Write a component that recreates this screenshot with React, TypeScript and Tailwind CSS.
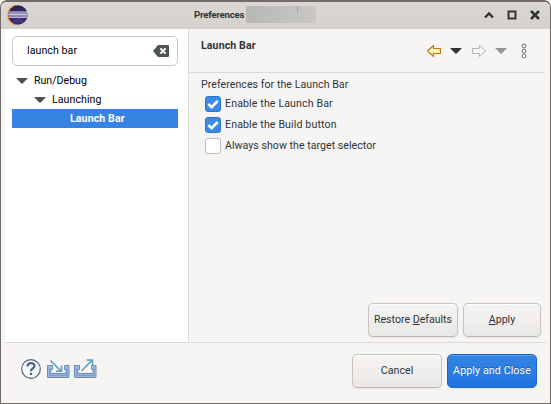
import React from "react";

const button =
  "box-border flex h-[34px] items-center justify-center rounded-[5px] border border-[#c8c3bd] border-b-[#bfb8b1] bg-linear-to-b from-[#f6f5f4] to-[#eae8e6] shadow-[0_1px_2px_rgba(0,0,0,0.07),inset_0_1px_0_#fff]";

function Triangle({ className = "text-[#4d4d4d]" }: { className?: string }) {
  return (
    <svg width="12" height="6" viewBox="0 0 12 6" className={`block shrink-0 ${className}`}>
      <path d="M0 0H12L6.6 5.6Q6 6 5.4 5.6Z" fill="currentColor" />
    </svg>
  );
}

function EclipseLogo() {
  return (
    <svg width="24" height="22" viewBox="0 0 24 22" className="mb-px block">
      <defs>
        <radialGradient id="orb" cx="0.5" cy="0.75" r="0.7">
          <stop offset="0" stopColor="#473788" />
          <stop offset="1" stopColor="#2a2050" />
        </radialGradient>
      </defs>
      <path d="M11 1.2A10 10 0 0 0 11 20.8A12 12 0 0 1 11 1.2Z" fill="#f7941e" stroke="#f7941e" strokeWidth="1.4" />
      <circle cx="13" cy="11" r="9.7" fill="url(#orb)" />
      <path d="M3.9 8.2H22.1" stroke="#c9c5dc" strokeWidth="1.2" />
      <path d="M3.5 11H22.5" stroke="#8f88b2" strokeWidth="4" />
      <path d="M3.4 10.5H22.6" stroke="#cfcce0" strokeWidth="1.2" />
      <path d="M3.9 13.5H22.1" stroke="#b9b3d2" strokeWidth="1.2" />
    </svg>
  );
}

function TitleBar() {
  return (
    <header className="flex h-[27px] shrink-0 items-center bg-linear-to-b from-[#dad6d2] to-[#d6d1cd] pr-[10px] pl-[4px]">
      <EclipseLogo />
      <div className="ml-[165px] w-[52px] pb-px text-[9.6px] font-bold whitespace-nowrap tracking-[-0.02em]">Preferences</div>
      <div className="mb-[2px] flex h-[17px] w-[70px] justify-end bg-linear-to-r from-[#b8b8b7] via-[#bfbfbe] to-[#c8c7c6] pr-[18px]">
        <div className="h-[8px] w-px bg-[#a9a9a8]" />
      </div>
      <div className="ml-auto flex items-center gap-[13px] pb-px">
        <svg width="10" height="10" viewBox="0 0 10 10">
          <path d="M1 7.5L5 3.5L9 7.5" fill="none" stroke="#2e3436" strokeWidth="2.4" />
        </svg>
        <svg width="10" height="10" viewBox="0 0 10 10">
          <path d="M1.5 1.5H8.5V8.5H1.5Z" fill="none" stroke="#2e3436" strokeWidth="2" />
        </svg>
        <svg width="10" height="10" viewBox="0 0 10 10">
          <path d="M1 1L9 9M9 1L1 9" fill="none" stroke="#2e3436" strokeWidth="2.5" />
        </svg>
      </div>
    </header>
  );
}

function Sidebar() {
  return (
    <aside className="w-[184px] shrink-0 border-r border-[#e0dfdd] bg-white pt-[7px] pr-[10px] pl-[7px] text-black">
      <div className="flex h-[30px] items-center justify-between rounded-[5px] border border-[#cdc7c2] pr-[8px] pl-[14px]">
        <span className="pb-px tracking-[0.07px]">launch bar</span>
        <svg width="16" height="12" viewBox="0 0 16 12">
          <path d="M5 0H15Q16 0 16 1V11Q16 12 15 12H5L0 6Z" fill="#4c5355" />
          <path d="M7.4 3.4L12.6 8.6M12.6 3.4L7.4 8.6" stroke="#fff" strokeWidth="2" />
        </svg>
      </div>
      <ul className="mt-[5px]">
        <li className="flex h-[19px] items-center pl-[4px]">
          <Triangle />
          <span className="ml-[6px]">Run/Debug</span>
        </li>
        <li className="flex h-[19px] items-center pl-[22px]">
          <Triangle />
          <span className="ml-[6px] tracking-[0.07px]">Launching</span>
        </li>
        <li className="flex h-[19px] items-center bg-[#3584e4] pl-[58px] font-bold tracking-[0.1px] text-white">Launch Bar</li>
      </ul>
    </aside>
  );
}

function NavArrow({ forward = false }: { forward?: boolean }) {
  return (
    <svg width="16" height="14" viewBox="0 0 16 14" className="block">
      {forward ? (
        <path d="M1.5 4.5H8.5V1.5L14.5 7L8.5 12.5V9.5H1.5Z" fill="#f8f8f8" stroke="#b4b4b4" strokeLinejoin="round" />
      ) : (
        <path d="M14.5 4.5H7.5V1.5L1.5 7L7.5 12.5V9.5H14.5Z" fill="#fff6c4" stroke="#bd7d14" strokeWidth="1.2" strokeLinejoin="round" />
      )}
    </svg>
  );
}

function PageHeader() {
  return (
    <div className="mr-[5px] flex h-[44px] shrink-0 items-start border-b border-[#dcdad8] pl-[12px]">
      <h1 className="mt-[10px] font-bold tracking-[0.1px]">Launch Bar</h1>
      <div className="mt-[14px] mr-[18px] ml-auto flex items-center">
        <NavArrow />
        <Triangle className="ml-[8px] text-[#2e3436]" />
        <span className="ml-[9px]">
          <NavArrow forward />
        </span>
        <Triangle className="ml-[8px] text-[#929595]" />
        <svg width="6" height="16" viewBox="0 0 6 16" className="ml-[14px]">
          <g fill="#fff" stroke="#6b6b6b">
            <circle cx="3" cy="3" r="1.9" />
            <circle cx="3" cy="8" r="1.9" />
            <circle cx="3" cy="13" r="1.9" />
          </g>
        </svg>
      </div>
    </div>
  );
}

function Check({ checked = false, label, spacing }: { checked?: boolean; label: string; spacing: string }) {
  return (
    <label className="flex h-[21px] items-center pl-[4px]">
      {checked ? (
        <span className="flex size-[16px] items-center justify-center rounded-[3px] border border-[#2a76d2] bg-[#3d8be8]">
          <svg width="14" height="14" viewBox="0 0 14 14">
            <path d="M2.3 7L5.6 10.2L11.7 4" fill="none" stroke="#fff" strokeWidth="2.6" />
          </svg>
        </span>
      ) : (
        <span className="size-[16px] rounded-[3px] border border-[#c3bbb4] bg-white" />
      )}
      <span className={`ml-[4px] whitespace-nowrap ${spacing}`}>{label}</span>
    </label>
  );
}

function TrayIcon({ out = false }: { out?: boolean }) {
  return (
    <svg width="23" height="21" viewBox="0 0 23 21" className="block">
      <path d="M.5 7.5H5.5V11.5H3.8V15.5H19V11.5H17.5V7.5H22V19.5H.5Z" fill="#a9c1df" stroke="#6b8ab6" />
      <path d="M2.5 9.5V17.5H20V9.5" fill="none" stroke="#7d9cc8" strokeWidth="1.4" />
      {out ? (
        <path d="M7.5 13L18 2.3M12.5 2H18.5V8" fill="none" stroke="#5b9dbd" strokeWidth="1.6" />
      ) : (
        <path d="M3.5 2.5L14 13M14.5 7.5V13.3H9" fill="none" stroke="#5b9dbd" strokeWidth="1.6" />
      )}
    </svg>
  );
}

function Footer() {
  return (
    <footer className="mx-[4px] flex h-[61px] shrink-0 items-start border-t border-[#dcdad8] pr-[9px] pl-[16px]">
      <svg width="20" height="20" viewBox="0 0 20 20" className="mt-[16px] block">
        <circle cx="10" cy="10" r="9.3" fill="#f5f7fa" stroke="#56657f" strokeWidth="1.2" />
        <path d="M6.5 7.4C6.5 3.2 13.5 3.2 13.5 7C13.5 9.5 10 9.5 10 12.3" fill="none" stroke="#4c628b" strokeWidth="2.2" />
        <path d="M8.9 13.8H11.1V16H8.9Z" fill="#4c628b" />
      </svg>
      <div className="mt-[15px] ml-[6px] flex gap-[4px]">
        <TrayIcon />
        <TrayIcon out />
      </div>
      <div className="mt-[11px] ml-auto flex gap-[5px]">
        <button className={`${button} w-[90px] pb-px tracking-[0.05px]`}>Cancel</button>
        <button className="flex h-[34px] w-[90px] items-center justify-center rounded-[5px] border border-[#1b65c4] bg-linear-to-b from-[#3584e4] to-[#1f76e1] pb-px tracking-[0.13px] whitespace-nowrap text-white shadow-[0_1px_2px_rgba(0,0,0,0.07),inset_0_1px_0_#5a9bea] [text-shadow:0_-1px_rgba(0,0,0,0.35)]">
          Apply and Close
        </button>
      </div>
    </footer>
  );
}

export default function App() {
  return (
    <div className="h-[404px] w-[551px] bg-white font-[Roboto,'Liberation_Sans',sans-serif] text-[10.6px] leading-[14px] text-[#2e3436]">
      <div className="flex size-full flex-col overflow-hidden rounded-t-[7px] border border-t-2 border-[#716b6a] bg-[#f6f5f4]">
        <TitleBar />
        <div className="flex min-h-0 flex-1 pl-[4px]">
          <Sidebar />
          <main className="flex min-w-0 flex-1 flex-col">
            <PageHeader />
            <section className="flex flex-1 flex-col pt-[4px] pr-[9px] pb-[5px] pl-[12px]">
              <p className="h-[16px] leading-[15px] tracking-[0.05px]">Preferences for the Launch Bar</p>
              <Check checked label="Enable the Launch Bar" spacing="tracking-[0.13px]" />
              <Check checked label="Enable the Build button" spacing="tracking-[0.13px]" />
              <Check label="Always show the target selector" spacing="tracking-[0.03px]" />
              <div className="mt-auto flex justify-end gap-[5px]">
                <button className={`${button} w-[90px] pb-px whitespace-nowrap`}>
                  <span>
                    Restore <u>D</u>efaults
                  </span>
                </button>
                <button className={`${button} w-[78px] pb-px`}>
                  <span>
                    <u>A</u>pply
                  </span>
                </button>
              </div>
            </section>
          </main>
        </div>
        <Footer />
      </div>
    </div>
  );
}
